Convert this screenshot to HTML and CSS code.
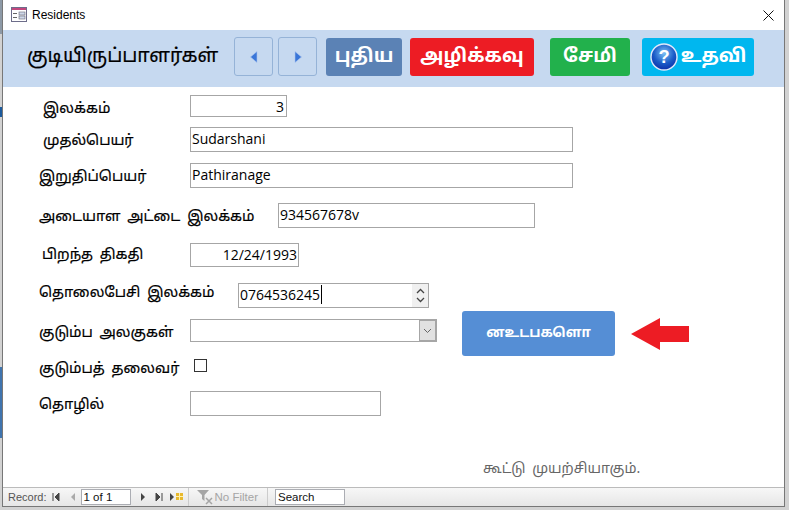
FILE: index.html
```html
<!DOCTYPE html>
<html lang="en">
<head>
    <meta charset="UTF-8">
    <title>Residents</title>
    <link rel="stylesheet" href="styles.css">
</head>
<body>
<div class="window">
    <div class="titlebar">
        <svg class="titlebar__icon" width="16" height="16" viewBox="0 0 16 16">
            <rect x="0.5" y="0.5" width="15" height="14" fill="#fff" stroke="#6d6d8a"/>
            <rect x="1" y="1" width="14" height="2" fill="#c2477e"/>
            <rect x="2" y="6" width="4" height="1" fill="#666"/>
            <rect x="2" y="10" width="4" height="1" fill="#666"/>
            <rect x="8" y="5" width="6" height="3" fill="#cfd8e8" stroke="#667" stroke-width="0.6"/>
            <rect x="8" y="9" width="6" height="3" fill="#cfd8e8" stroke="#667" stroke-width="0.6"/>
        </svg>
        <span class="titlebar__text">Residents</span>
        <svg class="titlebar__close" width="11" height="11" viewBox="0 0 11 11">
            <path d="M0.5 0.5 L10.5 10.5 M10.5 0.5 L0.5 10.5" stroke="#111" stroke-width="1" fill="none"/>
        </svg>
    </div>

    <div class="header">
        <div class="header__title">குடியிருப்பாளர்கள்</div>
        <div class="nav-btn">
            <svg width="8" height="12" viewBox="0 0 8 12"><path d="M7 0.5 L0.5 6 L7 11.5 Z" fill="#3a76d8" stroke="#a9c4ee" stroke-width="0.6"/></svg>
        </div>
        <div class="nav-btn nav-btn--next">
            <svg width="8" height="12" viewBox="0 0 8 12"><path d="M1 0.5 L7.5 6 L1 11.5 Z" fill="#3a76d8" stroke="#a9c4ee" stroke-width="0.6"/></svg>
        </div>
        <div class="btn btn--new">புதிய</div>
        <div class="btn btn--delete">அழிக்கவு</div>
        <div class="btn btn--save">சேமி</div>
        <div class="btn btn--help">
            <svg width="28" height="28" viewBox="0 0 29 29">
                <defs>
                    <radialGradient id="helpFill" cx="50%" cy="35%" r="65%">
                        <stop offset="0%" stop-color="#7cc0f5"/>
                        <stop offset="60%" stop-color="#1a5cc8"/>
                        <stop offset="100%" stop-color="#0c2fa8"/>
                    </radialGradient>
                </defs>
                <circle cx="14.5" cy="14.5" r="13.5" fill="url(#helpFill)" stroke="#dfe8fa" stroke-width="1.5"/>
                <text x="14.5" y="21" text-anchor="middle" class="help-mark">?</text>
            </svg>
            <span>உதவி</span>
        </div>
    </div>

    <div class="content">
        <div class="fields">
            <div class="row row--id">
                <label class="row__label row__label--in">இலக்கம்</label>
                <div class="input input--num">3</div>
            </div>
            <div class="row row--first">
                <label class="row__label row__label--in">முதல்பெயர்</label>
                <div class="input input--wide">Sudarshani</div>
            </div>
            <div class="row row--last">
                <label class="row__label">இறுதிப்பெயர்</label>
                <div class="input input--wide">Pathiranage</div>
            </div>
            <div class="row row--nic">
                <label class="row__label row__label--nic">அடையாள அட்டை இலக்கம்</label>
                <div class="input input--nic">934567678v</div>
            </div>
            <div class="row row--dob">
                <label class="row__label row__label--dob">பிறந்த திகதி</label>
                <div class="input input--date">12/24/1993</div>
            </div>
            <div class="row row--phone">
                <label class="row__label row__label--phone">தொலைபேசி இலக்கம்</label>
                <div class="input input--phone">
                    <span class="caret">0764536245</span>
                    <div class="spinner">
                        <svg width="9" height="6" viewBox="0 0 9 6"><path d="M1 5 L4.5 1.5 L8 5" fill="none" stroke="#444" stroke-width="1.3"/></svg>
                        <svg width="9" height="6" viewBox="0 0 9 6"><path d="M1 1 L4.5 4.5 L8 1" fill="none" stroke="#444" stroke-width="1.3"/></svg>
                    </div>
                </div>
            </div>
            <div class="row row--family">
                <label class="row__label">குடும்ப அலகுகள்</label>
                <div class="input input--combo">
                    <div class="combo-btn">
                        <svg width="9" height="6" viewBox="0 0 9 6"><path d="M1 1 L4.5 4.5 L8 1" fill="none" stroke="#666" stroke-width="1"/></svg>
                    </div>
                </div>
            </div>
            <div class="row row--head">
                <label class="row__label row__label--head">குடும்பத் தலைவர்</label>
                <div class="checkbox"></div>
            </div>
            <div class="row row--job">
                <label class="row__label">தொழில்</label>
                <div class="input input--job"></div>
            </div>
        </div>

        <div class="side">
            <div class="side__action">
                <div class="btn-report">னஉடபகளாெ</div>
                <svg class="arrow" width="58" height="32" viewBox="0 0 58 32"><path d="M0 16 L29 0 L29 8 L58 8 L58 24 L29 24 L29 32 Z" fill="#ed1c24"/></svg>
            </div>
            <div class="side__note">கூட்டு முயற்சியாகும்.</div>
        </div>
    </div>

    <div class="statusbar">
        <span class="statusbar__label">Record:</span>
        <svg class="nav-icon" width="8" height="8" viewBox="0 0 8 8"><path d="M1 0 V8 M7 0 V8 L3 4 Z" fill="#444" stroke="#444" stroke-width="1"/></svg>
        <svg class="nav-icon nav-icon--off" width="8" height="8" viewBox="0 0 8 8"><path d="M6 0 V8 L2 4 Z" fill="#aaa"/></svg>
        <div class="statusbar__box statusbar__box--record">1 of 1</div>
        <svg class="nav-icon" width="8" height="8" viewBox="0 0 8 8"><path d="M2 0 V8 L6 4 Z" fill="#444"/></svg>
        <svg class="nav-icon" width="8" height="8" viewBox="0 0 8 8"><path d="M1 0 V8 L5 4 Z M7 0 V8" fill="#444" stroke="#444" stroke-width="1"/></svg>
        <svg class="nav-icon nav-icon--new" width="14" height="8" viewBox="0 0 14 8">
            <path d="M0 0 V8 L4 4 Z" fill="#444"/>
            <rect x="6" y="0" width="7" height="7" fill="#e8b92e"/>
            <path d="M6 3.5 H13 M9.5 0 V7" stroke="#fff2b0" stroke-width="1"/>
        </svg>
        <div class="statusbar__filter">
            <svg width="18" height="16" viewBox="0 0 18 16">
                <path d="M0 1 H12 L7.5 6 V12 L5 10 V6 Z" fill="#a5a5a5"/>
                <path d="M9 9 L15 15 M15 9 L9 15" stroke="#a5a5a5" stroke-width="1.5"/>
            </svg>
            <span>No Filter</span>
        </div>
        <div class="statusbar__box statusbar__box--search">Search</div>
    </div>
</div>
</body>
</html>
```

FILE: styles.css
```css
html, body {
    margin: 0;
    padding: 0;
    height: 100%;
    overflow: hidden;
}

/* the windows behind the form show along the left edge */
body {
    background:
        linear-gradient(#3f74ae, #3f74ae) 0 367px / 2px 71px no-repeat,
        linear-gradient(#1c5a9c, #1c5a9c) 0 107px / 2px 10px no-repeat,
        linear-gradient(#8d99a6, #8d99a6) 0 0 / 2px 34px no-repeat,
        #d2d2d2;
    font-family: "Noto Sans Tamil", "Noto Sans", "DejaVu Sans", sans-serif;
    color: #000;
}

.window {
    display: flex;
    flex-direction: column;
    box-sizing: border-box;
    width: 783px;
    height: 507px;
    margin-left: 2px;
    background: #fff;
    border-left: 1px solid #777;
    border-right: 1px solid #777;
    border-bottom: 1px solid #777;
}

.titlebar {
    display: flex;
    align-items: center;
    height: 30px;
    padding: 0 10px 0 8px;
    flex: none;
}

.titlebar__text {
    margin-left: 5px;
    font: 12px "Liberation Sans", sans-serif;
}

.titlebar__close {
    margin-left: auto;
}

.header {
    display: flex;
    align-items: center;
    box-sizing: border-box;
    height: 57px;
    padding-bottom: 4px;
    flex: none;
    background: #c6d9f0;
}

.header__title {
    width: 231px;
    padding-left: 24px;
    box-sizing: border-box;
    font-size: 19.4px;
    -webkit-text-stroke: 0.2px #000;
    white-space: nowrap;
}

.nav-btn {
    display: flex;
    align-items: center;
    justify-content: center;
    box-sizing: border-box;
    width: 39px;
    height: 39px;
    border: 1px solid #95b3d7;
    border-radius: 3px;
}

.nav-btn--next {
    margin-left: 5px;
}

.btn {
    display: flex;
    align-items: center;
    justify-content: center;
    height: 38px;
    border-radius: 3px;
    color: #fff;
    font-size: 19px;
    font-weight: bold;
    white-space: nowrap;
}

.btn--new {
    width: 76px;
    margin-left: 9px;
    background: #5b82b5;
}

.btn--delete {
    width: 124px;
    margin-left: 8px;
    background: #ed1c24;
}

.btn--save {
    width: 80px;
    margin-left: 16px;
    background: #22b14c;
}

.btn--help {
    width: 112px;
    margin-left: 12px;
    gap: 3px;
    background: #00b7ef;
}

.help-mark {
    font: bold 19px "Liberation Sans", sans-serif;
    fill: #fff;
}

.content {
    display: flex;
    flex: 1;
    min-height: 0;
}

.fields {
    width: 459px;
    padding: 8px 0 0 36px;
    box-sizing: border-box;
    flex: none;
}

.row {
    display: flex;
    align-items: flex-start;
    font-size: 14.5px;
    word-spacing: 3px;
}

.row__label {
    width: 151px;
    margin-top: 4px;
    flex: none;
    box-sizing: border-box;
    line-height: 20px;
    -webkit-text-stroke: 0.2px #000;
    white-space: nowrap;
}

.row__label--in {
    padding-left: 4px;
}

.row__label--nic {
    width: 239px;
}

.row__label--dob {
    margin-top: 2px;
    padding-left: 3px;
}

.row__label--phone {
    width: 199px;
    margin-top: 0;
}

.row__label--head {
    margin-top: 0;
}

.row--id {
    height: 22px;
}

.row--first {
    height: 25px;
    margin-top: 10px;
}

.row--last {
    height: 25px;
    margin-top: 11px;
}

.row--nic {
    height: 25px;
    margin-top: 15px;
}

.row--dob {
    height: 24px;
    margin-top: 15px;
}

.row--phone {
    height: 25px;
    margin-top: 16px;
}

.row--family {
    height: 23px;
    margin-top: 11px;
}

.row--head {
    height: 14px;
    margin-top: 17px;
}

.row--job {
    height: 25px;
    margin-top: 18px;
}

.input {
    display: flex;
    align-items: center;
    flex: none;
    box-sizing: border-box;
    height: 100%;
    padding: 0 1px 2px;
    border: 1px solid #a6a6a6;
    background: #fff;
    font: 14px "Open Sans", sans-serif;
    word-spacing: 0;
}

.input--num {
    justify-content: flex-end;
    width: 97px;
    padding: 0 2px;
}

.input--wide {
    width: 383px;
}

.input--nic {
    width: 257px;
}

.input--date {
    justify-content: flex-end;
    width: 109px;
}

.input--phone {
    width: 191px;
}

.caret {
    padding-right: 1px;
    border-right: 1px solid #000;
}

.spinner {
    display: flex;
    flex-direction: column;
    align-items: center;
    justify-content: center;
    gap: 3px;
    box-sizing: border-box;
    width: 16px;
    height: 23px;
    margin: 0 -1px -2px auto;
    background: #f0f0f0;
}

.input--combo {
    justify-content: flex-end;
    width: 247px;
    padding: 0;
}

.combo-btn {
    display: flex;
    align-items: center;
    justify-content: center;
    box-sizing: border-box;
    width: 17px;
    height: 21px;
    border: 1px solid #a6a6a6;
    background: #e1e1e1;
}

.checkbox {
    box-sizing: border-box;
    width: 13px;
    height: 13px;
    margin-left: 4px;
    border: 1px solid #333;
}

.input--job {
    width: 191px;
}

.side {
    flex: 1;
    padding-top: 224px;
}

.side__action {
    display: flex;
    align-items: center;
    gap: 16px;
}

.btn-report {
    display: flex;
    align-items: center;
    justify-content: center;
    width: 153px;
    height: 45px;
    border-radius: 3px;
    background: #558ed5;
    color: #fff;
    font-size: 13.5px;
    font-weight: bold;
}

.side__note {
    margin: 105px 0 0 21px;
    color: #666;
    font-size: 14px;
    word-spacing: 3px;
}

.statusbar {
    display: flex;
    align-items: center;
    box-sizing: border-box;
    height: 19px;
    flex: none;
    padding-left: 5px;
    border-top: 1px solid #bbb;
    background: linear-gradient(#f7f7f7, #e6e6e6);
    color: #555;
    font: 11px "Liberation Sans", sans-serif;
}

.statusbar__label {
    margin-right: 5px;
}

.nav-icon {
    margin-right: 8px;
}

.nav-icon:first-of-type {
    margin-right: 9px;
}

.nav-icon--off {
    margin-right: 4px;
}

.nav-icon--new {
    margin-left: -1px;
    margin-right: 4px;
}

.statusbar__box {
    box-sizing: border-box;
    height: 16px;
    padding-left: 2px;
    border: 1px solid #abadb3;
    background: #fff;
    color: #111;
    font-size: 11.5px;
    line-height: 14px;
}

.statusbar__box--record {
    width: 50px;
    margin-right: 8px;
}

.statusbar__box--search {
    width: 70px;
    margin-left: 7px;
}

.statusbar__filter {
    display: flex;
    align-items: center;
    height: 100%;
    padding: 0 9px 0 8px;
    border-left: 1px solid #ccc;
    border-right: 1px solid #ccc;
    color: #a5a5a5;
    font-size: 11.5px;
}
```
